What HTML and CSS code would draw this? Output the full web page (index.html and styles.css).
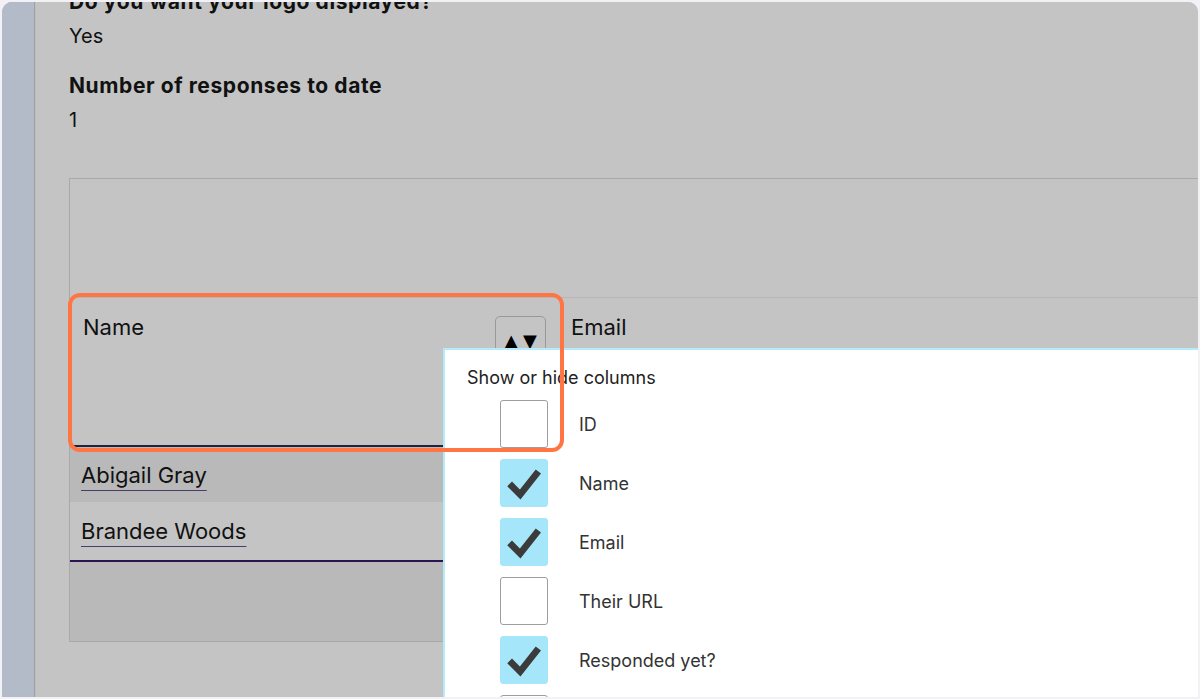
FILE: index.html
```html
<!DOCTYPE html>
<html lang="en">
<head>
<meta charset="utf-8">
<title>Responses</title>
<link rel="stylesheet" href="styles.css">
</head>
<body>
<div class="screen">
  <aside class="rail"></aside>
  <main class="main">
    <div class="field">
      <div class="field-label">Do you want your logo displayed?</div>
      <div class="field-value">Yes</div>
    </div>
    <div class="field">
      <div class="field-label">Number of responses to date</div>
      <div class="field-value">1</div>
    </div>

    <div class="table-wrap">
      <div class="toolbar"></div>
      <div class="thead">
        <div class="th th-name">
          <span>Name</span>
          <button class="sort-btn" type="button"><span class="arrow">▲</span><span class="arrow">▼</span></button>
        </div>
        <div class="th th-email"><span>Email</span></div>
      </div>
      <div class="tr tr-alt"><div class="td"><a class="link" href="#">Abigail Gray</a></div></div>
      <div class="tr tr-last"><div class="td"><a class="link" href="#">Brandee Woods</a></div></div>
      <div class="tfoot"></div>
    </div>
  </main>

  <div class="popup">
    <div class="popup-title">Show or hide columns</div>
    <ul class="col-list">
      <li class="col-item"><span class="box"></span><span class="col-label">ID</span></li>
      <li class="col-item"><span class="box box-on"><svg viewBox="0 0 48 48"><polyline points="9,25 20,36 39,12"/></svg></span><span class="col-label">Name</span></li>
      <li class="col-item"><span class="box box-on"><svg viewBox="0 0 48 48"><polyline points="9,25 20,36 39,12"/></svg></span><span class="col-label">Email</span></li>
      <li class="col-item"><span class="box"></span><span class="col-label">Their URL</span></li>
      <li class="col-item"><span class="box box-on"><svg viewBox="0 0 48 48"><polyline points="9,25 20,36 39,12"/></svg></span><span class="col-label">Responded yet?</span></li>
      <li class="col-item"><span class="box"></span><span class="col-label"></span></li>
    </ul>
  </div>

  <div class="highlight"></div>
</div>
</body>
</html>
```

FILE: styles.css
```css
* { box-sizing: border-box; }

html, body {
  margin: 0;
  padding: 0;
}

body {
  background: #f1f1f6;
  font-family: "Inter", "Noto Sans", sans-serif;
  color: #111;
  overflow: hidden;
}

.screen {
  position: relative;
  width: 1196px;
  height: 695px;
  margin: 2px 2px 0 2px;
  border-radius: 10px 10px 0 0;
  overflow: hidden;
  display: flex;
  background: #c4c4c4;
}

.rail {
  flex: 0 0 32px;
  background: #b3bac8;
  box-shadow: 1px 0 1px rgba(0,0,0,0.18);
  position: relative;
  z-index: 1;
}

.main {
  flex: 1;
  min-width: 0;
  padding-left: 35px;
  background: #c4c4c4;
  overflow: hidden;
}

.field {
  margin-bottom: 20px;
}
.field:first-child {
  margin-top: -15px;
}

.field-label {
  font-size: 21px;
  font-weight: 700;
  letter-spacing: 0.6px;
  line-height: 30px;
  margin-bottom: 4px;
}

.field-value {
  font-size: 20px;
  line-height: 30px;
}

.table-wrap {
  margin-top: 43px;
  width: 1200px;
  border: 1px solid #a9a9a9;
  background: #c4c4c4;
}

.toolbar {
  height: 119px;
  border-bottom: 1px solid #b6b6b6;
}

.thead {
  display: flex;
  height: 149px;
  border-bottom: 2px solid #26203a;
}

.th {
  font-size: 22px;
  line-height: 28px;
  padding: 15px 13px;
}

.th-name {
  flex: 0 0 489px;
  display: flex;
  justify-content: space-between;
  align-items: flex-start;
}

.th-email {
  flex: 1;
  padding-left: 12px;
}

.sort-btn {
  margin-top: 3px;
  width: 51px;
  height: 44px;
  border: 1px solid #999;
  border-radius: 5px;
  background: transparent;
  padding: 15px 0 0 0;
  display: flex;
  justify-content: center;
  align-items: flex-start;
  gap: 5px;
}

.arrow {
  font-family: "DejaVu Sans", sans-serif;
  font-size: 18px;
  line-height: 1;
  color: #000;
  display: block;
}

.tr {
  display: flex;
  align-items: center;
  height: 56px;
}

.tr-alt {
  background: #b9b9b9;
  height: 55px;
}

.tr-last {
  border-bottom: 2px solid #2a1552;
  height: 60px;
}

.td {
  padding-left: 11px;
  font-size: 22px;
  line-height: 28px;
}

.link {
  color: #111;
  text-decoration: underline;
  text-decoration-color: #4a3d6b;
  text-decoration-thickness: 1px;
  text-underline-offset: 7px;
}

.tfoot {
  height: 79px;
  background: #b9b9b9;
}

.popup {
  position: absolute;
  left: 441px;
  top: 346px;
  width: 800px;
  height: 400px;
  background: #fff;
  border: 2px solid #b4eafa;
  padding: 16px 0 0 22px;
  z-index: 2;
}

.popup-title {
  font-size: 18px;
  line-height: 24px;
  color: #222;
}

.col-list {
  list-style: none;
  margin: 10px 0 0 0;
  padding: 0 0 0 33px;
  display: flex;
  flex-direction: column;
  gap: 11px;
}

.col-item {
  display: flex;
  align-items: center;
  gap: 31px;
  height: 48px;
}

.box {
  flex: 0 0 48px;
  width: 48px;
  height: 48px;
  border: 1.5px solid #9e9e9e;
  border-radius: 3px;
  background: #fff;
  display: flex;
}

.box-on {
  background: #a6e6fb;
  border-color: #a6e6fb;
}

.box svg {
  width: 100%;
  height: 100%;
}

.box svg polyline {
  fill: none;
  stroke: #3b3b3b;
  stroke-width: 7;
  stroke-linejoin: miter;
}

.col-label {
  font-size: 18px;
  color: #333;
}

.highlight {
  position: absolute;
  left: 66px;
  top: 291px;
  width: 496px;
  height: 159px;
  border: 4px solid #ff7543;
  border-radius: 12px;
  z-index: 3;
  pointer-events: none;
}
```
